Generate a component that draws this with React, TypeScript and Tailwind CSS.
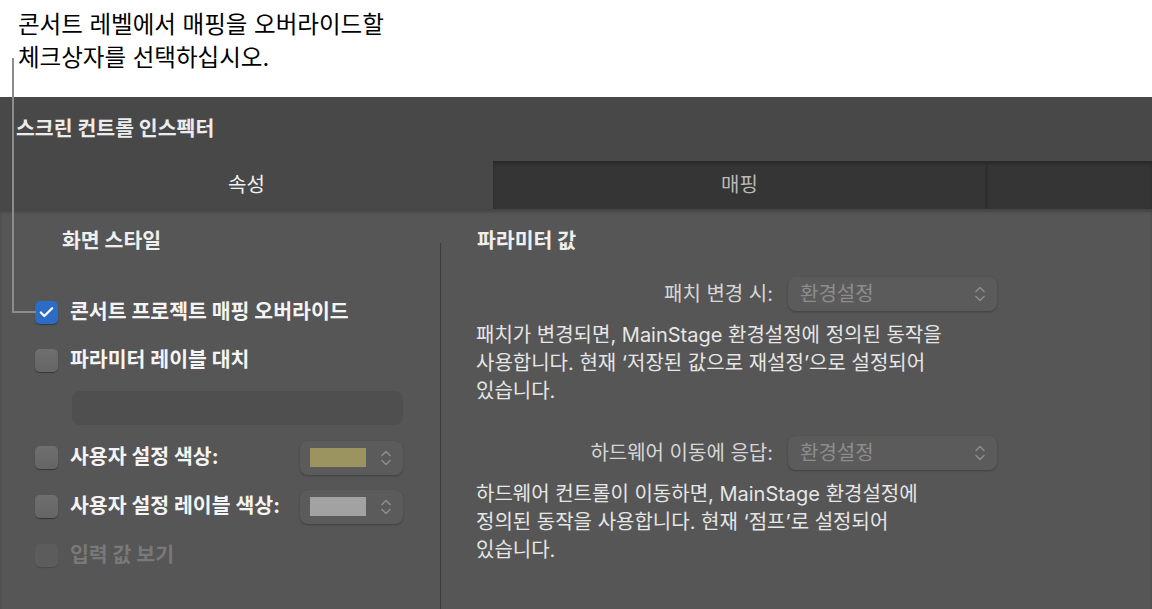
import { Check } from 'lucide-react';

function Checkbox({ checked = false, disabled = false }: { checked?: boolean; disabled?: boolean }) {
  if (checked) {
    return (
      <div className="w-[23px] h-[23px] rounded-[5px] bg-[#2c6cc6] shadow-[0_1px_1px_rgba(0,0,0,0.35)] flex items-center justify-center shrink-0">
        <Check className="w-[17px] h-[17px] text-white" strokeWidth={3.2} />
      </div>
    );
  }
  return (
    <div
      className={`w-[23px] h-[23px] rounded-[5px] shrink-0 ${
        disabled
          ? 'bg-[#5c5c5c] shadow-[0_1px_1px_rgba(0,0,0,0.15)]'
          : 'bg-gradient-to-b from-[#6f6f6f] to-[#656565] shadow-[0_1px_1px_rgba(0,0,0,0.4)]'
      }`}
    />
  );
}

function Chevrons({ color = '#8c8c8c' }: { color?: string }) {
  return (
    <svg width="12" height="20" viewBox="0 0 12 20" fill="none" stroke={color} strokeWidth="1.6" strokeLinecap="round" strokeLinejoin="round">
      <path d="M2 7.5 L6 3.5 L10 7.5" />
      <path d="M2 12.5 L6 16.5 L10 12.5" />
    </svg>
  );
}

function ColorPopup({ swatch }: { swatch: string }) {
  return (
    <div className="ml-auto w-[103px] h-[34px] rounded-[8px] bg-[#5b5b5b] shadow-[0_1px_2px_rgba(0,0,0,0.25)] flex items-center pl-[10px] pr-[11px] shrink-0">
      <div className={`w-[56px] h-[19px] ${swatch}`} />
      <div className="ml-auto">
        <Chevrons />
      </div>
    </div>
  );
}

function ValuePopup() {
  return (
    <div className="w-[209px] h-[34px] rounded-[8px] bg-[#5b5b5b] shadow-[0_1px_2px_rgba(0,0,0,0.25)] flex items-center pl-[12px] pr-[11px]">
      <span className="text-[20px] text-[#8d8d8d]">환경설정</span>
      <div className="ml-auto">
        <Chevrons />
      </div>
    </div>
  );
}

export default function App() {
  return (
    <div className="relative w-[1152px] h-[609px] overflow-hidden bg-white font-['Inter','Noto_Sans_CJK_KR',sans-serif]">
      {/* Callout */}
      <div className="h-[97px] pt-[8px] pl-[18px] text-[23.5px] leading-[33px] text-black">
        콘서트 레벨에서 매핑을 오버라이드할
        <br />
        체크상자를 선택하십시오.
      </div>

      {/* Header */}
      <div className="h-[64px] bg-[#484848] flex items-center pl-[16px]">
        <span className="text-[20.5px] font-bold text-[#ececec]">스크린 컨트롤 인스펙터</span>
      </div>

      {/* Tabs */}
      <div className="h-[48px] flex">
        <div className="w-[493px] bg-[#484848] flex items-center justify-center text-[20px] text-[#f0f0f0]">
          속성
        </div>
        <div className="w-[493px] bg-[#353535] shadow-[inset_0_3px_3px_rgba(0,0,0,0.22)] flex items-center justify-center text-[20px] text-[#b9b9b9]">
          매핑
        </div>
        <div className="flex-1 bg-[#353535] border-l border-[#2d2d2d] shadow-[inset_0_3px_3px_rgba(0,0,0,0.22)]" />
      </div>

      {/* Body */}
      <div className="h-[400px] bg-[#565656] flex shadow-[inset_0_3px_3px_rgba(0,0,0,0.2)]">
        {/* Left column */}
        <div className="w-[440px] flex flex-col">
          <div className="mt-[18px] h-[28px] pl-[62px] text-[20.5px] leading-[28px] font-bold text-[#efefef]">
            화면 스타일
          </div>

          <div className="mt-[33px] h-[48px] pl-[35px] flex items-center gap-[12px]">
            <Checkbox checked />
            <span className="text-[20.5px] font-bold text-[#f4f4f4]">콘서트 프로젝트 매핑 오버라이드</span>
          </div>
          <div className="h-[48px] pl-[35px] flex items-center gap-[12px]">
            <Checkbox />
            <span className="text-[20.5px] font-bold text-[#f4f4f4]">파라미터 레이블 대치</span>
          </div>

          <div className="mt-[7px] ml-[72px] w-[331px] h-[34px] rounded-[8px] bg-[#4f4f4f]" />

          <div className="mt-[8px] h-[49px] pl-[35px] w-[403px] flex items-center gap-[12px]">
            <Checkbox />
            <span className="text-[20.5px] font-bold text-[#f4f4f4] whitespace-nowrap">사용자 설정 색상:</span>
            <ColorPopup swatch="bg-[#9b9461]" />
          </div>
          <div className="h-[49px] pl-[35px] w-[403px] flex items-center gap-[12px]">
            <Checkbox />
            <span className="text-[20.5px] font-bold text-[#f4f4f4] whitespace-nowrap">사용자 설정 레이블 색상:</span>
            <ColorPopup swatch="bg-[#a2a2a2]" />
          </div>
          <div className="h-[49px] pl-[35px] flex items-center gap-[12px]">
            <Checkbox disabled />
            <span className="text-[20.5px] font-bold text-[#797979]">입력 값 보기</span>
          </div>
        </div>

        {/* Divider */}
        <div className="mt-[34px] w-px bg-[#3c3c3c]" />

        {/* Right column */}
        <div className="flex-1 flex flex-col">
          <div className="mt-[18px] h-[28px] pl-[36px] text-[20.5px] leading-[28px] font-bold text-[#efefef]">
            파라미터 값
          </div>

          <div className="mt-[22px] w-[556px] flex items-center justify-end gap-[15px]">
            <span className="text-[20px] text-[#d6d6d6]">패치 변경 시:</span>
            <ValuePopup />
          </div>
          <p className="mt-[10px] pl-[35px] text-[20px] leading-[28px] text-[#e6e6e6] whitespace-nowrap">
            패치가 변경되면, MainStage 환경설정에 정의된 동작을
            <br />
            사용합니다. 현재 ‘저장된 값으로 재설정’으로 설정되어
            <br />
            있습니다.
          </p>

          <div className="mt-[31px] w-[556px] flex items-center justify-end gap-[15px]">
            <span className="text-[20px] text-[#d6d6d6]">하드웨어 이동에 응답:</span>
            <ValuePopup />
          </div>
          <p className="mt-[10px] pl-[35px] text-[20px] leading-[28px] text-[#e6e6e6] whitespace-nowrap">
            하드웨어 컨트롤이 이동하면, MainStage 환경설정에
            <br />
            정의된 동작을 사용합니다. 현재 ‘점프’로 설정되어
            <br />
            있습니다.
          </p>
        </div>
      </div>

      {/* Callout leader line */}
      <div className="absolute left-[12px] top-[58px] w-[2px] h-[255px] bg-[#8c8c8c]" />
      <div className="absolute left-[12px] top-[311px] w-[24px] h-[2px] bg-[#8c8c8c]" />
    </div>
  );
}
